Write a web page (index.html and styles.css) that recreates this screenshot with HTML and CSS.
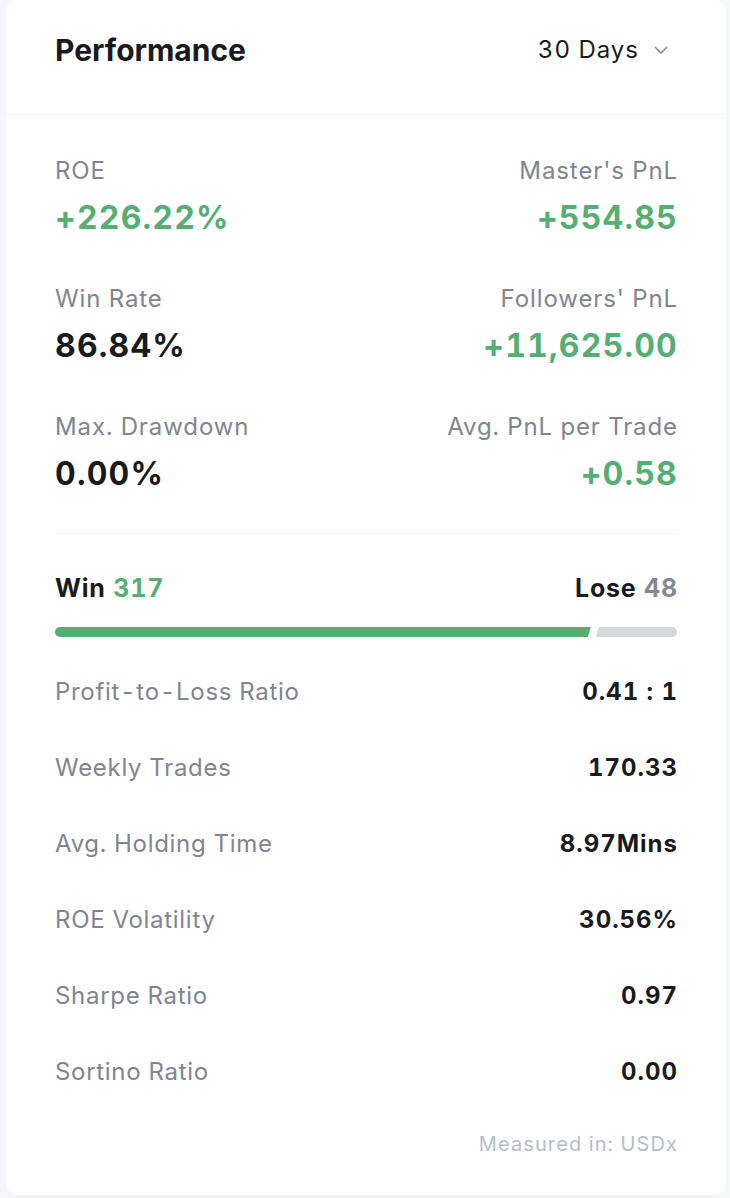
FILE: index.html
```html
<!doctype html>
<html>
<head>
	<title>Performance</title>
	<meta charset="utf-8">
	<link rel="stylesheet" href="styles.css">
</head>
<body>

	<div class="card">
		<div class="head">
			<h2>Performance</h2>
			<div class="period">
				30 Days
				<svg class="chevron" width="16" height="10" viewBox="0 0 16 10">
					<path d="M2 2 L8 8 L14 2" fill="none" stroke="#8a8f98" stroke-width="1.6" />
				</svg>
			</div>
		</div>

		<div class="body">
			<div class="stats">
				<div class="stat">
					<div class="label">ROE</div>
					<div class="value up">+226.22%</div>
				</div>
				<div class="stat right">
					<div class="label">Master's PnL</div>
					<div class="value up">+554.85</div>
				</div>
				<div class="stat">
					<div class="label">Win Rate</div>
					<div class="value">86.84%</div>
				</div>
				<div class="stat right">
					<div class="label">Followers' PnL</div>
					<div class="value up">+11,625.00</div>
				</div>
				<div class="stat">
					<div class="label">Max. Drawdown</div>
					<div class="value">0.00%</div>
				</div>
				<div class="stat right">
					<div class="label">Avg. PnL per Trade</div>
					<div class="value up">+0.58</div>
				</div>
			</div>

			<div class="score">
				<span>Win <em class="win">317</em></span>
				<span>Lose <em class="lose">48</em></span>
			</div>
			<div class="bar">
				<div class="win" style="flex-grow: 317;"></div>
				<div class="lose" style="flex-grow: 48;"></div>
			</div>

			<div class="rows">
				<div class="row"><span>Profit-to-Loss Ratio</span><b>0.41 : 1</b></div>
				<div class="row"><span>Weekly Trades</span><b>170.33</b></div>
				<div class="row"><span>Avg. Holding Time</span><b>8.97Mins</b></div>
				<div class="row"><span>ROE Volatility</span><b>30.56%</b></div>
				<div class="row"><span>Sharpe Ratio</span><b>0.97</b></div>
				<div class="row"><span>Sortino Ratio</span><b>0.00</b></div>
			</div>

			<p class="note">Measured in: USDx</p>
		</div>
	</div>

</body>
</html>
```

FILE: styles.css
```css
* {
	box-sizing: border-box;
}
body {
	margin: 0;
	background: #f5f6f9;
	color: #181a20;
	font-family: Inter, "Liberation Sans", sans-serif;
	font-variant-numeric: tabular-nums;
}
.card {
	width: 720px;
	margin: 0 4px 3px 6px;
	border-radius: 12px;
	background: #fff;
}
.head {
	display: flex;
	justify-content: space-between;
	align-items: center;
	height: 115px;
	padding: 0 49px 14px;
	border-bottom: 1px solid #eff0f3;
}
.head h2 {
	margin: 0;
	font-size: 30px;
	font-weight: 700;
	line-height: 36px;
}
.period {
	display: flex;
	align-items: center;
	gap: 14px;
	margin-right: 8px;
	font-size: 24px;
	letter-spacing: 1px;
	line-height: 32px;
}
.body {
	padding: 40px 48px 37px 49px;
}
.stats {
	display: grid;
	grid-template-columns: 1fr 1fr;
	row-gap: 43px;
	padding-bottom: 37px;
	border-bottom: 1px solid #eff0f3;
}
.stat.right {
	text-align: right;
}
.label {
	color: #80858f;
	font-size: 24px;
	letter-spacing: 0.9px;
	line-height: 32px;
}
.value {
	margin-top: 9px;
	font-size: 32px;
	font-weight: 700;
	letter-spacing: 1.2px;
	line-height: 44px;
}
.up {
	color: #55af72;
}
.score {
	display: flex;
	justify-content: space-between;
	margin-top: 38px;
	font-size: 25px;
	font-weight: 700;
	letter-spacing: 0.8px;
	line-height: 32px;
}
.score em {
	font-style: normal;
}
.score .win {
	color: #55af72;
}
.score .lose {
	color: #848a93;
}
.bar {
	display: flex;
	gap: 5px;
	height: 10px;
	margin-top: 23px;
	margin-right: 1px;
}
.bar div {
	flex-basis: 0;
}
.bar .win {
	border-radius: 5px 0 0 5px;
	background: #55af72;
	clip-path: polygon(0 0, 100% 0, calc(100% - 3px) 100%, 0 100%);
}
.bar .lose {
	border-radius: 0 5px 5px 0;
	background: #d5d8db;
	clip-path: polygon(3px 0, 100% 0, 100% 100%, 0 100%);
}
.rows {
	display: flex;
	flex-direction: column;
	gap: 44px;
	margin-top: 39px;
}
.row {
	display: flex;
	justify-content: space-between;
	font-size: 24px;
	letter-spacing: 0.7px;
	line-height: 32px;
}
.row span {
	color: #80858f;
}
.row b {
	font-weight: 700;
	letter-spacing: 1px;
}
.note {
	margin: 42px 0 0;
	color: #b7bdc6;
	font-size: 20px;
	letter-spacing: 1.1px;
	line-height: 28px;
	text-align: right;
}
```
